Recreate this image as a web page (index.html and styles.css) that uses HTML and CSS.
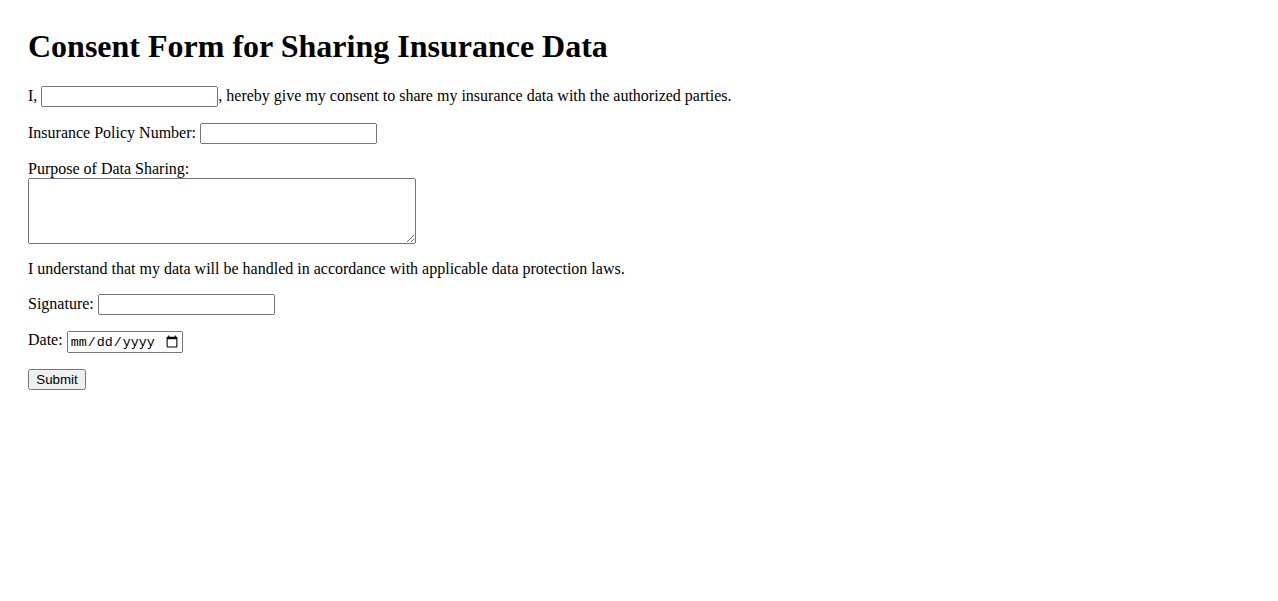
FILE: index.html
```html
<!DOCTYPE html>
<html>
<head>
<meta charset="utf-8">
<title>Consent Form</title>
<link rel="stylesheet" href="styles.css">
</head>
<body class="page">
<form class="consent-form">
  <h1 class="title">Consent Form for Sharing Insurance Data</h1>
  <p class="row">I, <input type="text" class="field">, hereby give my consent to share my insurance data with the authorized parties.</p>
  <p class="row">Insurance Policy Number: <input type="text" class="field"></p>
  <p class="row">Purpose of Data Sharing:<br><textarea class="purpose" rows="4" cols="50"></textarea></p>
  <p class="row">I understand that my data will be handled in accordance with applicable data protection laws.</p>
  <p class="row">Signature: <input type="text" class="field"></p>
  <p class="row">Date: <input type="date" class="date"></p>
  <p class="row"><button type="submit" class="submit">Submit</button></p>
</form>
</body>
</html>
```
FILE: styles.css
```css
.page {
  margin: 0;
  padding: 28px;
  font-family: "Liberation Serif", "Times New Roman", serif;
  font-size: 16px;
  color: #000;
  background: #fff;
}
.title {
  margin: 0 0 21.44px 0;
  font-size: 32px;
  font-weight: bold;
}
.row {
  margin: 16px 0;
}
.field {
  box-sizing: border-box;
  width: 177px;
}
.date {
  box-sizing: border-box;
  width: 116px;
  font-family: "Liberation Mono", "Courier New", monospace;
}
.purpose {
  display: block;
  box-sizing: border-box;
  width: 388px;
  height: 66px;
  resize: vertical;
}
.submit {
  font-family: "Liberation Sans", Arial, sans-serif;
  width: 58px;
}
```
